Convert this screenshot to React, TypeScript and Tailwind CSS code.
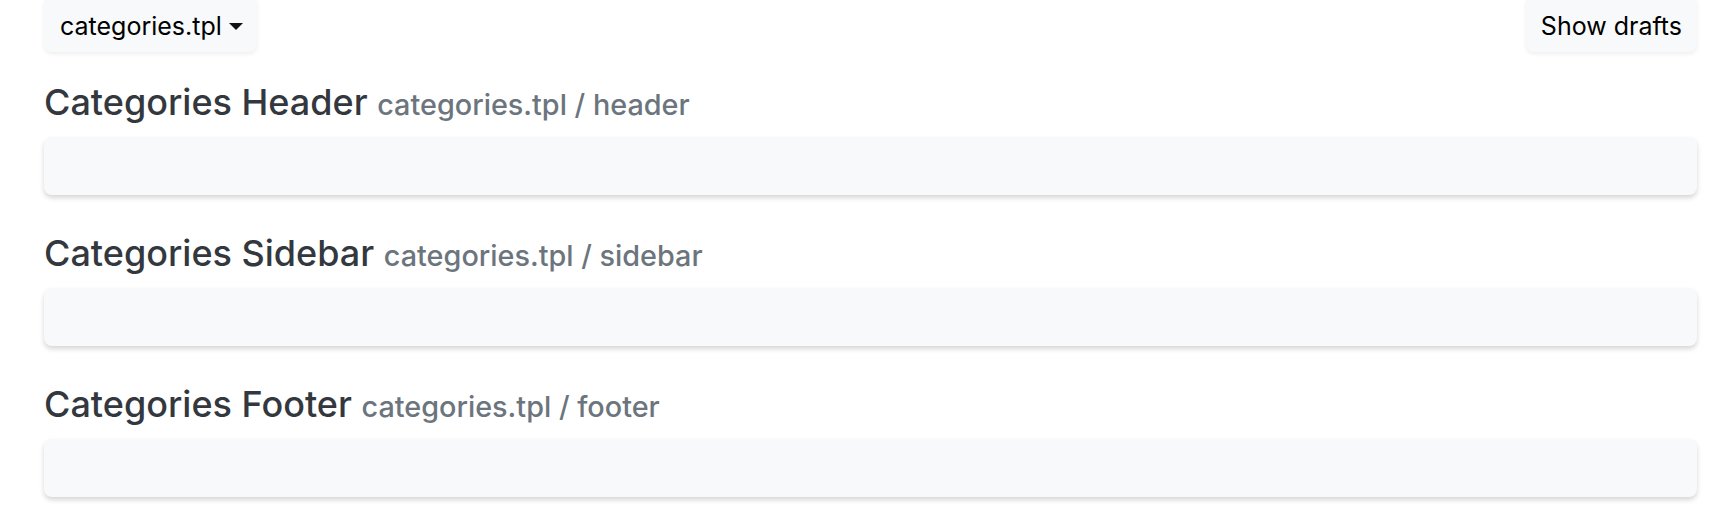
import * as React from "react"

const sections = [
    { title: "Categories Header", path: "categories.tpl / header" },
    { title: "Categories Sidebar", path: "categories.tpl / sidebar" },
    { title: "Categories Footer", path: "categories.tpl / footer" },
]

export default function App() {
    return (
        <div className="min-h-[532px] w-full bg-white pl-[44px] pr-[25px] font-['Inter',sans-serif]">
            {/* toolbar */}
            <div className="flex items-start justify-between">
                <button className="flex h-[52px] items-center rounded-b-[8px] bg-[#f8f9fa] pl-[16px] pr-[14px] text-[25px] leading-none text-[#000] shadow-[0_2px_4px_rgba(0,0,0,0.07)]">
                    <span>categories.tpl</span>
                    <span className="ml-[7px] mt-[1px] h-0 w-0 border-x-[7px] border-t-[7px] border-x-transparent border-t-[#111]" />
                </button>
                <button className="flex h-[52px] items-center rounded-b-[8px] bg-[#f8f9fa] px-[15px] text-[25px] leading-none text-[#000] shadow-[0_2px_4px_rgba(0,0,0,0.07)]">
                    Show drafts
                </button>
            </div>

            {/* template blocks */}
            <div className="mt-[29px] flex flex-col gap-[37px]">
                {sections.map((s) => (
                    <div key={s.title}>
                        <h4 className="mb-[13px] text-[36px] font-medium leading-[43px] text-[#33383e]">
                            {s.title}{" "}
                            <small className="text-[28.8px] font-medium leading-none text-[#6c757d]">{s.path}</small>
                        </h4>
                        <div className="h-[58px] rounded-[8px] bg-[#f8f9fa] shadow-[0_3px_5px_rgba(0,0,0,0.16)]" />
                    </div>
                ))}
            </div>
        </div>
    )
}
